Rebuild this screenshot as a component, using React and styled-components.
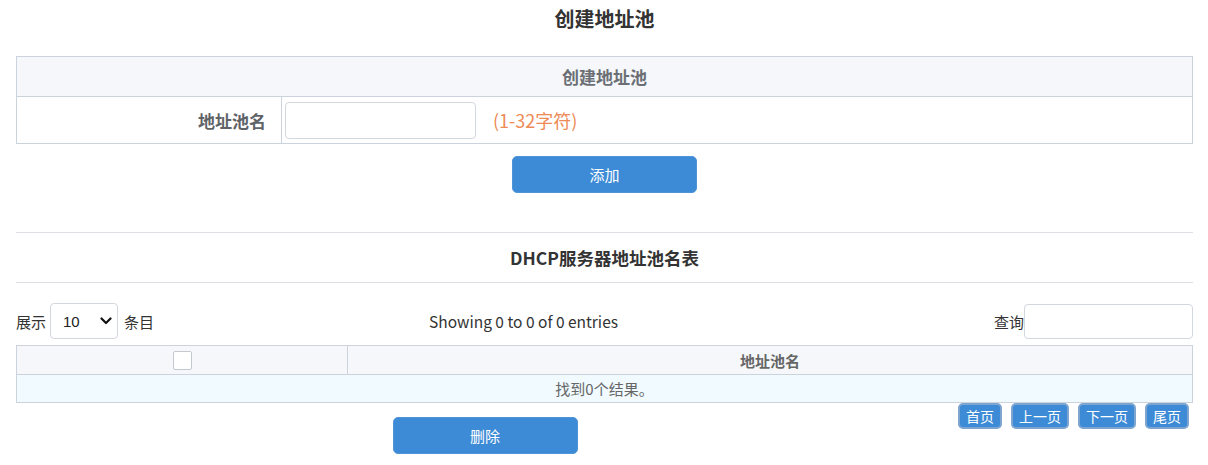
import React from "react";
import styled, { createGlobalStyle } from "styled-components";

const GlobalStyle = createGlobalStyle`
  html, body { margin: 0; padding: 0; background: #fff; }
  body {
    font-family: "Noto Sans CJK SC", "Microsoft YaHei", sans-serif;
    font-size: 15px;
    color: #555;
  }
  * { box-sizing: border-box; }
`;

const BLUE = "#3d8bd6";
const LINE = "#cdd3dd";

const Page = styled.div`
  padding: 0 15px 0 16px;
`;

const PageTitle = styled.h1`
  margin: 0;
  padding-top: 8px;
  height: 56px;
  text-align: center;
  font-size: 20px;
  line-height: 22px;
  font-weight: 700;
  color: #333;
`;

const FormBox = styled.div`
  border: 1px solid ${LINE};
`;

const FormHead = styled.div`
  height: 40px;
  display: flex;
  align-items: center;
  justify-content: center;
  background: #f5f7fa;
  border-bottom: 1px solid ${LINE};
  font-size: 17px;
  font-weight: 700;
  color: #6b6f75;
`;

const FormRow = styled.div`
  display: flex;
  height: 46px;
`;

const LabelCell = styled.div`
  width: 265px;
  border-right: 1px solid ${LINE};
  display: flex;
  align-items: center;
  justify-content: flex-end;
  padding-right: 15px;
  font-size: 17px;
  font-weight: 700;
  color: #5f6368;
`;

const ValueCell = styled.div`
  flex: 1;
  display: flex;
  align-items: center;
  padding-left: 3px;
`;

const TextInput = styled.input`
  width: ${(p) => p.$w}px;
  height: ${(p) => p.$h}px;
  border: 1px solid #d3d7de;
  border-radius: 4px;
  padding: 0 8px;
  font: inherit;
  outline: none;
  background: #fff;
`;

const Hint = styled.span`
  margin-left: 17px;
  color: #ee8a55;
  font-size: 18px;
`;

const ButtonRow = styled.div`
  display: flex;
  justify-content: center;
  padding-top: 12px;
  height: 88px;
`;

const PrimaryButton = styled.button`
  width: 185px;
  height: 37px;
  border: 1px solid #4f94d6;
  border-radius: 5px;
  background: ${BLUE};
  color: #fff;
  font-family: inherit;
  font-size: 15px;
  cursor: pointer;
  margin-top: ${(p) => p.$mt || 0}px;
`;

const Rule = styled.div`
  height: 1px;
  background: #dde1e6;
`;

const SectionTitle = styled.h2`
  margin: 0;
  height: 49px;
  display: flex;
  align-items: center;
  justify-content: center;
  font-size: 17.5px;
  font-weight: 700;
  color: #333;
`;

const Controls = styled.div`
  display: flex;
  align-items: center;
  height: 36px;
  margin-top: 20px;
  color: #333;
`;

const LengthGroup = styled.label`
  display: flex;
  align-items: center;
  gap: 4px;
`;

const SelectWrap = styled.span`
  position: relative;
  display: inline-flex;
  margin-right: 2px;
`;

const Select = styled.select`
  appearance: none;
  width: 68px;
  height: 36px;
  border: 1px solid #d3d7de;
  border-radius: 4px;
  padding: 0 0 0 12px;
  font-family: "Liberation Sans", Arial, sans-serif;
  font-size: 15px;
  color: #222;
  background: #fff;
`;

const Chevron = styled.svg`
  position: absolute;
  right: 6px;
  top: 13px;
  pointer-events: none;
`;

const Info = styled.div`
  flex: 1;
  text-align: center;
  font-size: 15.5px;
`;

const Filter = styled.label`
  width: 300px;
  display: flex;
  justify-content: flex-end;
  align-items: center;
`;

const Grid = styled.div`
  margin-top: 6px;
  border: 1px solid ${LINE};
`;

const GridHead = styled.div`
  display: grid;
  grid-template-columns: 330px 1fr;
  height: 29px;
  background: #f5f7fa;
  border-bottom: 1px solid ${LINE};
`;

const HeadCell = styled.div`
  display: flex;
  align-items: center;
  justify-content: center;
  font-weight: 700;
  color: #666;
  border-left: ${(p) => (p.$first ? "none" : `1px solid ${LINE}`)};
`;

const Check = styled.span`
  width: 19px;
  height: 19px;
  border: 1px solid #c4c9d1;
  border-radius: 2px;
  background: #fff;
`;

const EmptyRow = styled.div`
  height: 27px;
  background: #f0faff;
  display: flex;
  align-items: center;
  justify-content: center;
  color: #666;
`;

const Footer = styled.div`
  display: flex;
  align-items: flex-start;
`;

const FooterLeft = styled.div`
  flex: 1;
  display: flex;
  justify-content: center;
`;

const Pager = styled.div`
  display: flex;
  gap: 9px;
  padding: 0 4px 0 0;
  margin-left: 4px;
`;

const PageBtn = styled.button`
  height: 26px;
  padding: 0 6px;
  border: 2px solid #7ea5cf;
  border-radius: 5px;
  background: ${BLUE};
  color: #fff;
  font-family: inherit;
  font-size: 14px;
  line-height: 20px;
  cursor: pointer;
`;

export default function App() {
  return (
    <>
      <GlobalStyle />
      <Page>
        <PageTitle>创建地址池</PageTitle>
        <FormBox>
          <FormHead>创建地址池</FormHead>
          <FormRow>
            <LabelCell>地址池名</LabelCell>
            <ValueCell>
              <TextInput $w={191} $h={37} />
              <Hint>(1-32字符)</Hint>
            </ValueCell>
          </FormRow>
        </FormBox>
        <ButtonRow>
          <PrimaryButton>添加</PrimaryButton>
        </ButtonRow>
        <Rule />
        <SectionTitle>DHCP服务器地址池名表</SectionTitle>
        <Rule />
        <Controls>
          <LengthGroup>
            展示
            <SelectWrap>
              <Select defaultValue="10">
                <option value="10">10</option>
                <option value="25">25</option>
                <option value="50">50</option>
                <option value="100">100</option>
              </Select>
              <Chevron width="12" height="10" viewBox="0 0 12 10">
                <path d="M1.5 2.5 L6 7 L10.5 2.5" fill="none" stroke="#111" strokeWidth="2.2" strokeLinecap="round" strokeLinejoin="round" />
              </Chevron>
            </SelectWrap>
            条目
          </LengthGroup>
          <Info>Showing 0 to 0 of 0 entries</Info>
          <Filter>
            查询
            <TextInput $w={169} $h={35} />
          </Filter>
        </Controls>
        <Grid>
          <GridHead>
            <HeadCell $first>
              <Check />
            </HeadCell>
            <HeadCell>地址池名</HeadCell>
          </GridHead>
          <EmptyRow>找到0个结果。</EmptyRow>
        </Grid>
        <Footer>
          <FooterLeft>
            <PrimaryButton $mt={14}>删除</PrimaryButton>
          </FooterLeft>
          <Pager>
            <PageBtn>首页</PageBtn>
            <PageBtn>上一页</PageBtn>
            <PageBtn>下一页</PageBtn>
            <PageBtn>尾页</PageBtn>
          </Pager>
        </Footer>
      </Page>
    </>
  );
}
